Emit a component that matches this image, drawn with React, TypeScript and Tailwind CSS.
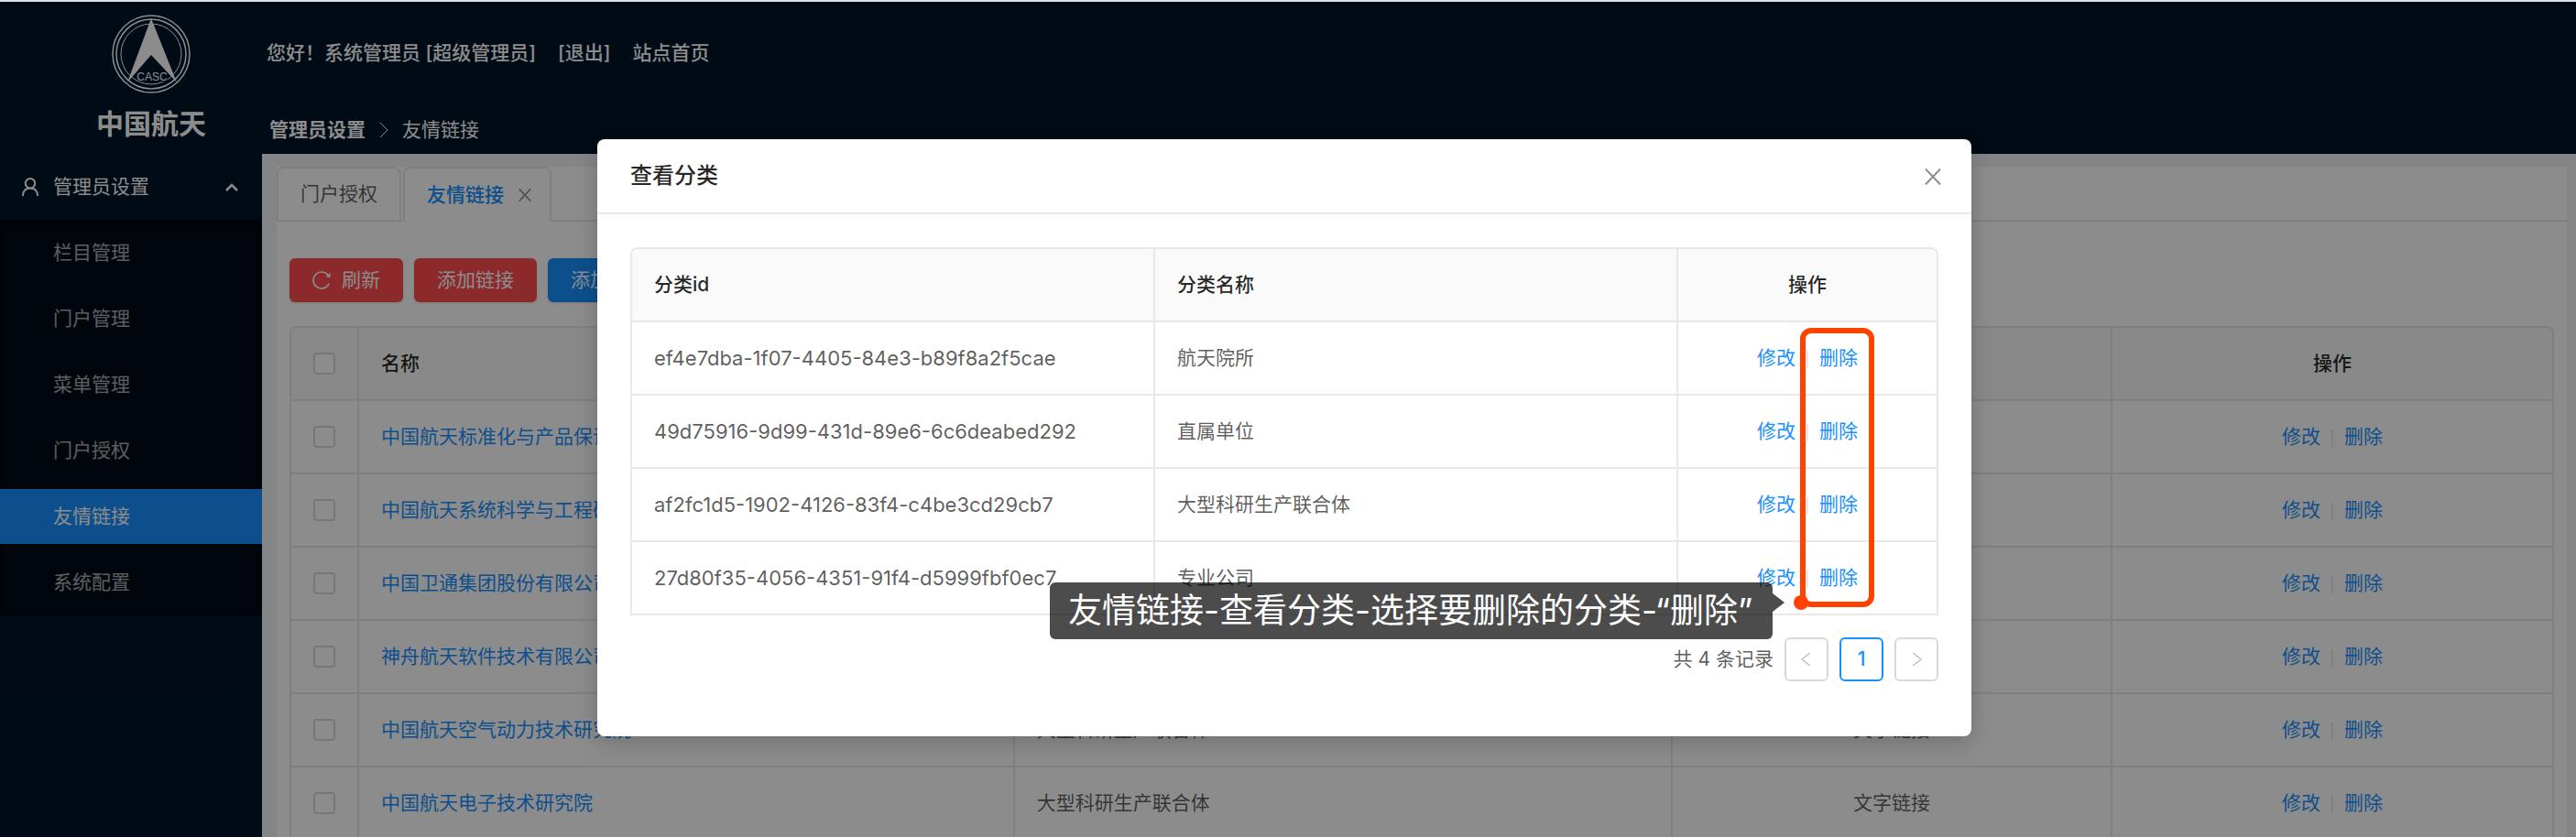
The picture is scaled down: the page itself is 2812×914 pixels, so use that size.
import React from "react";

const FONT = "font-[Inter,'Noto_Sans_CJK_SC',sans-serif]";

const menu = ["栏目管理", "门户管理", "菜单管理", "门户授权", "友情链接", "系统配置"];

const links = [
  { name: "中国航天标准化与产品保证研究院", category: "直属单位", type: "文字链接" },
  { name: "中国航天系统科学与工程研究院", category: "直属单位", type: "文字链接" },
  { name: "中国卫通集团股份有限公司", category: "专业公司", type: "文字链接" },
  { name: "神舟航天软件技术有限公司", category: "专业公司", type: "文字链接" },
  { name: "中国航天空气动力技术研究院", category: "大型科研生产联合体", type: "文字链接" },
  { name: "中国航天电子技术研究院", category: "大型科研生产联合体", type: "文字链接" },
];

const categories = [
  { id: "ef4e7dba-1f07-4405-84e3-b89f8a2f5cae", name: "航天院所" },
  { id: "49d75916-9d99-431d-89e6-6c6deabed292", name: "直属单位" },
  { id: "af2fc1d5-1902-4126-83f4-c4be3cd29cb7", name: "大型科研生产联合体" },
  { id: "27d80f35-4056-4351-91f4-d5999fbf0ec7", name: "专业公司" },
];

function Logo() {
  return (
    <svg viewBox="0 0 86 86" className="size-[86px]" fill="none" stroke="#fff" aria-hidden="true">
      <circle cx="43" cy="43" r="42" strokeWidth="1.5" />
      <circle cx="43" cy="43" r="38" strokeWidth="1.5" />
      <circle cx="43" cy="43" r="33" strokeWidth="1" />
      <path d="M43 4 L71 74 L43 44 L17 74 Z" fill="#fff" stroke="none" />
      <text x="44" y="72" textAnchor="middle" fontSize="12" fill="#fff" stroke="#001529" strokeWidth="2" paintOrder="stroke" fontFamily="Liberation Sans, sans-serif">
        CASC
      </text>
    </svg>
  );
}

function CloseIcon({ className }: { className: string }) {
  return (
    <svg viewBox="0 0 18 18" className={className} stroke="currentColor" strokeWidth="2" aria-hidden="true">
      <path d="M1 0.5 L17 17.5 M17 0.5 L1 17.5" fill="none" />
    </svg>
  );
}

function Chevron({ className, d }: { className: string; d: string }) {
  return (
    <svg viewBox="0 0 16 16" className={className} fill="none" stroke="currentColor" aria-hidden="true">
      <path d={d} />
    </svg>
  );
}

function Actions() {
  return (
    <div className="flex items-center justify-center gap-3">
      <a href="#edit" className="text-[#1890ff]">修改</a>
      <span className="mt-[2px] h-[19px] w-[2px] bg-[#e8e8e8]" />
      <a href="#delete" className="text-[#1890ff]">删除</a>
    </div>
  );
}

const th = "h-20 border-b-2 border-r-2 border-[#e8e8e8] bg-[#fafafa] px-6 font-medium text-black/85 last:border-r-0";
const td = "h-20 border-b-2 border-r-2 border-[#e8e8e8] px-6 last:border-r-0";
const checkbox = "mx-auto block size-6 appearance-none rounded border-2 border-[#d9d9d9] bg-white";

function SideNav() {
  return (
    <aside className="w-[286px] shrink-0 bg-[#001529] text-white">
      <div className="flex flex-col items-center pt-[14px] pl-11">
        <Logo />
        <span className="mt-3 text-[30px] leading-[42px] font-bold">中国航天</span>
      </div>
      <button type="button" className="mt-[18px] flex h-[60px] w-full items-center pr-[25px] pl-6">
        <svg viewBox="0 0 18 20" className="h-5 w-[18px]" fill="none" stroke="currentColor" strokeWidth="2" aria-hidden="true">
          <circle cx="9" cy="6.2" r="5.2" />
          <path d="M1 20 C1 14 4.500 11.500 9 11.500 S17 14 17 20" />
        </svg>
        <span className="ml-4 flex-1 text-left">管理员设置</span>
        <Chevron className="size-4 stroke-[2.5]" d="M2 12 L8 6 L14 12" />
      </button>
      <nav className="mt-[6px] flex flex-col gap-3 bg-[#000c17] py-[6px] shadow-[inset_0_3px_12px_rgba(0,0,0,0.45)]">
        {menu.map((item) => (
          <a
            key={item}
            href="#menu"
            className={
              item === "友情链接"
                ? "flex h-[60px] items-center bg-[#1890ff] pl-[58px] text-white"
                : "flex h-[60px] items-center pl-[58px] text-white/65"
            }
          >
            {item}
          </a>
        ))}
      </nav>
    </aside>
  );
}

function LinkTable() {
  return (
    <div className="mt-[26px] overflow-hidden rounded-t-lg border-2 border-b-0 border-[#e8e8e8]">
      <table className="w-full table-fixed border-separate border-spacing-0">
        <thead>
          <tr>
            <th className="h-20 w-[74px] border-r-2 border-b-2 border-[#e8e8e8] bg-[#fafafa]">
              <input type="checkbox" aria-label="全选" className={checkbox} />
            </th>
            <th className={`${th} w-[29%] text-left`}>名称</th>
            <th className={`${th} w-[29.1%] text-left`}>分类</th>
            <th className={th}>类型</th>
            <th className={th}>操作</th>
          </tr>
        </thead>
        <tbody>
          {links.map((l) => (
            <tr key={l.name}>
              <td className="h-20 border-r-2 border-b-2 border-[#e8e8e8]">
                <input type="checkbox" aria-label={l.name} className={checkbox} />
              </td>
              <td className={td}>
                <a href="#link" className="text-[#1890ff]">{l.name}</a>
              </td>
              <td className={td}>{l.category}</td>
              <td className={`${td} text-center`}>{l.type}</td>
              <td className={td}>
                <Actions />
              </td>
            </tr>
          ))}
        </tbody>
      </table>
    </div>
  );
}

function CategoryDialog() {
  return (
    <div role="dialog" aria-label="查看分类" className="relative w-[1500px] max-w-full rounded-lg bg-white shadow-[0_6px_24px_rgba(0,0,0,0.2)]">
      <div className="flex h-[82px] items-center justify-between border-b-2 border-[#e8e8e8] pr-[33px] pl-9">
        <h2 className="text-2xl font-medium text-black/85">查看分类</h2>
        <button type="button" aria-label="关闭" className="mt-[2px] text-black/45">
          <CloseIcon className="size-[18px]" />
        </button>
      </div>
      <div className="px-9 pt-9 pb-[60px]">
        <div className="overflow-hidden rounded-t-lg border-2 border-b-0 border-[#e8e8e8]">
          <table className="w-full table-fixed border-separate border-spacing-0">
            <thead>
              <tr>
                <th className={`${th} w-[40.1%] text-left`}>分类id</th>
                <th className={`${th} w-[40.1%] text-left`}>分类名称</th>
                <th className={th}>操作</th>
              </tr>
            </thead>
            <tbody>
              {categories.map((c) => (
                <tr key={c.id}>
                  <td className={`${td} text-[22px]`}>{c.id}</td>
                  <td className={td}>{c.name}</td>
                  <td className={td}>
                    <Actions />
                  </td>
                </tr>
              ))}
            </tbody>
          </table>
        </div>
        <div className="mt-6 flex items-center justify-end gap-3">
          <span>共 4 条记录</span>
          <button type="button" aria-label="上一页" className="flex size-12 items-center justify-center rounded-md border-2 border-[#d9d9d9] text-black/25">
            <Chevron className="size-4 stroke-[1.5]" d="M12 1 L3 8 L12 15" />
          </button>
          <button type="button" className="flex size-12 items-center justify-center rounded-md border-2 border-[#1890ff] font-medium text-[#1890ff]">1</button>
          <button type="button" aria-label="下一页" className="flex size-12 items-center justify-center rounded-md border-2 border-[#d9d9d9] text-black/25">
            <Chevron className="size-4 stroke-[1.5]" d="M4 1 L13 8 L4 15" />
          </button>
        </div>
      </div>

      <div className="pointer-events-none absolute top-[206px] left-[1313px] h-[305px] w-[81px] rounded-xl border-[6px] border-[#ff4200]" />
      <div className="absolute top-[498px] left-[1306px] size-4 rounded-full bg-[#ff4200]" />
      <div className="absolute top-[484px] left-[494px] flex h-[62px] items-center rounded-md bg-black/70 pr-[22px] pl-5 text-[37px] whitespace-nowrap text-white">
        友情链接-查看分类-选择要删除的分类-“删除”
        <svg viewBox="0 0 13 20" className="absolute top-3 left-full h-5 w-[13px]" aria-hidden="true">
          <path d="M0 0 L13 10 L0 20 Z" fill="#000" fillOpacity="0.7" />
        </svg>
      </div>
    </div>
  );
}

export default function App() {
  return (
    <div className={`${FONT} flex h-screen flex-col overflow-hidden text-[21px] leading-8 text-black/65`}>
      <div className="h-[2px] shrink-0 bg-[#dee1e6]" />
      <div className="relative flex min-h-0 flex-1">
        <SideNav />
        <div className="flex min-w-0 flex-1 flex-col bg-[#f0f2f5]">
          <header className="flex h-[166px] shrink-0 flex-col justify-between bg-[#001529] pt-10 pb-[10px] text-white">
            <div className="flex items-center gap-6 pl-[5px] font-medium">
              <span>您好！系统管理员 [超级管理员]</span>
              <a href="#logout">[退出]</a>
              <a href="#home">站点首页</a>
            </div>
            <div className="flex items-center pl-2">
              <span className="font-bold">管理员设置</span>
              <Chevron className="mx-3 size-4" d="M4 0 L12 8 L4 16" />
              <span>友情链接</span>
            </div>
          </header>
          <main className="mt-[14px] mr-[10px] ml-4 min-h-0 flex-1 bg-white">
            <div role="tablist" className="flex h-[60px]">
              <button type="button" role="tab" aria-selected="false" className="rounded-t-lg border-2 border-[#e8e8e8] px-6">
                门户授权
              </button>
              <span className="w-[2px] border-b-2 border-[#e8e8e8]" />
              <button type="button" role="tab" aria-selected="true" className="flex items-center gap-4 rounded-t-lg border-2 border-b-0 border-[#e8e8e8] pr-5 pl-6 font-medium text-[#1890ff]">
                友情链接
                <CloseIcon className="size-[14px] text-black/45" />
              </button>
              <span className="flex-1 border-b-2 border-[#e8e8e8]" />
            </div>
            <div className="px-[14px] pt-10">
              <div className="flex gap-3 text-white">
                <button type="button" className="flex h-12 items-center gap-3 rounded-md bg-[#ff4d4f] px-[25px] shadow-sm">
                  <svg viewBox="0 0 20 20" className="size-5" fill="none" stroke="currentColor" strokeWidth="1.6" aria-hidden="true">
                    <path d="M18.300 13.500 A9 9 0 1 1 17.500 5" />
                    <path d="M19.500 2 V7 L14.500 6.200 Z" fill="currentColor" stroke="none" />
                  </svg>
                  刷新
                </button>
                <button type="button" className="h-12 rounded-md bg-[#ff4d4f] px-[25px] shadow-sm">添加链接</button>
                <button type="button" className="h-12 rounded-md bg-[#1890ff] px-[25px] shadow-sm">添加分类</button>
              </div>
              <LinkTable />
            </div>
          </main>
        </div>
        <div className="absolute inset-0 flex items-start justify-center overflow-hidden bg-black/45 pt-[150px] pr-2">
          <CategoryDialog />
        </div>
      </div>
    </div>
  );
}
